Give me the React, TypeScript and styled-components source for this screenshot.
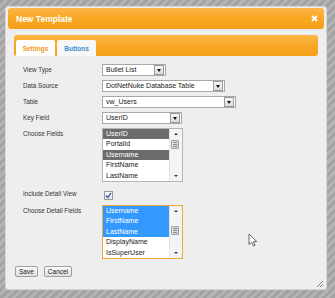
import React from "react";
import styled, { createGlobalStyle, css } from "styled-components";

const GlobalStyle = createGlobalStyle`
  html, body {
    margin: 0;
    padding: 0;
  }
  body {
    width: 335px;
    height: 298px;
    overflow: hidden;
    background: repeating-linear-gradient(
      135deg,
      #a3a3a3 0px,
      #a3a3a3 3px,
      #b4b4b4 3px,
      #b4b4b4 6px
    );
    font-family: "Liberation Sans", Arial, sans-serif;
  }
`;

const orange = css`
  background: linear-gradient(#fcb646, #f8a622 55%, #f6a01a);
`;

const Dialog = styled.div`
  position: relative;
  box-sizing: border-box;
  margin: 6px 0 0 5px;
  width: 322px;
  height: 284px;
  border: 1px solid #d4d4d4;
  border-radius: 3px;
  background: #eeeeee;
  padding: 1px 2px 0;
  display: flex;
  flex-direction: column;
`;

const TitleBar = styled.div`
  ${orange};
  height: 21px;
  border-radius: 3px;
  display: flex;
  align-items: center;
  justify-content: space-between;
  padding: 0 6px 0 8px;
  color: #fff;
  font-weight: bold;
  font-size: 8.5px;
`;

const Content = styled.div`
  padding: 6px 6px 0;
`;

const TabBar = styled.div`
  ${orange};
  height: 21px;
  box-sizing: border-box;
  border-radius: 3px;
  padding: 5px 2px 0;
  display: flex;
  align-items: flex-end;
  gap: 2px;
`;

const Tab = styled.div<{ $active?: boolean }>`
  width: 39px;
  height: 16px;
  border-radius: 2px 2px 0 0;
  background: ${(p) => (p.$active ? "#ffffff" : "#f7f7f7")};
  color: ${(p) => (p.$active ? "#f29b21" : "#3a8fd0")};
  font-weight: bold;
  font-size: 6.5px;
  display: flex;
  align-items: center;
  justify-content: center;
`;

const Form = styled.div`
  display: grid;
  grid-template-columns: 79px auto;
  row-gap: 4px;
  padding: 8px 0 0 9px;
  justify-items: start;
`;

const Label = styled.div<{ $h?: number }>`
  font-size: 6.3px;
  color: #333;
  line-height: ${(p) => p.$h ?? 12}px;
`;

const Select = styled.div<{ $w: number }>`
  box-sizing: border-box;
  width: ${(p) => p.$w}px;
  height: 12px;
  border: 1px solid #a8a8a8;
  background: #fff;
  display: flex;
  align-items: stretch;
`;

const SelectText = styled.div`
  flex: 1;
  font-size: 7px;
  line-height: 10px;
  padding-left: 3px;
  color: #222;
`;

const DropButton = styled.div`
  width: 10px;
  margin: 0 1px 0 0;
  box-sizing: border-box;
  border: 1px solid #9a9a9a;
  background: linear-gradient(#f6f6f6, #dcdcdc);
  display: flex;
  align-items: center;
  justify-content: center;
  &::after {
    content: "";
    border-left: 2.5px solid transparent;
    border-right: 2.5px solid transparent;
    border-top: 3px solid #111;
  }
`;

const ListBox = styled.div<{ $focus?: boolean }>`
  box-sizing: border-box;
  width: 81px;
  height: 54px;
  border: 1px solid ${(p) => (p.$focus ? "#f0a53a" : "#b5b5b5")};
  background: #fff;
  display: flex;
  overflow: hidden;
`;

const Items = styled.div`
  flex: 1;
`;

const Item = styled.div<{ $sel?: "gray" | "blue" }>`
  height: 10.4px;
  line-height: 10.4px;
  font-size: 7px;
  padding-left: 3px;
  color: ${(p) => (p.$sel ? "#fff" : "#222")};
  background: ${(p) =>
    p.$sel === "gray" ? "#6c6c6c" : p.$sel === "blue" ? "#3399ff" : "transparent"};
`;

const ScrollBar = styled.div`
  position: relative;
  width: 12px;
  background: #f4f4f4;
  border-left: 1px solid #e2e2e2;
`;

const Arrow = styled.div<{ $down?: boolean }>`
  position: absolute;
  left: 4px;
  ${(p) => (p.$down ? "bottom: 4px;" : "top: 4px;")}
  border-left: 2px solid transparent;
  border-right: 2px solid transparent;
  ${(p) =>
    p.$down ? "border-top: 2px solid #333;" : "border-bottom: 2px solid #333;"}
`;

const Thumb = styled.div`
  position: absolute;
  left: 1px;
  width: 8px;
  height: 9px;
  box-sizing: border-box;
  border: 1px solid #a0a0a0;
  border-radius: 1px;
  background: linear-gradient(90deg, #e8e8e8, #d4d4d4);
  display: flex;
  flex-direction: column;
  justify-content: center;
  align-items: center;
  gap: 1px;
  & > i {
    width: 4px;
    height: 1px;
    background: #888;
  }
`;

const CheckRow = styled.div`
  height: 15px;
  display: flex;
  align-items: flex-start;
  padding: 5px 0 0 2px;
  box-sizing: border-box;
`;

const CheckBox = styled.div`
  width: 9px;
  height: 9px;
  box-sizing: border-box;
  border: 1px solid #9a9a9a;
  background: linear-gradient(#fafafa, #e6e6e6);
  display: flex;
  align-items: center;
  justify-content: center;
`;

const Footer = styled.div`
  display: flex;
  gap: 6px;
  padding: 7px 0 0 7px;
`;

const Button = styled.div`
  height: 11px;
  box-sizing: border-box;
  padding: 0 3px;
  border: 1px solid #a0a0a0;
  border-radius: 2px;
  background: linear-gradient(#fbfbfb, #dedede);
  font-size: 6.5px;
  line-height: 9px;
  color: #222;
`;

const Grip = styled.svg`
  position: absolute;
  right: 2px;
  bottom: 1px;
`;

const Cursor = styled.svg`
  position: absolute;
  left: 242px;
  top: 226px;
`;

type ListItem = { name: string; sel?: "gray" | "blue" };

const List = ({
  items,
  focus,
  thumbTop,
}: {
  items: ListItem[];
  focus?: boolean;
  thumbTop: number;
}) => (
  <ListBox $focus={focus}>
    <Items>
      {items.map((it) => (
        <Item key={it.name} $sel={it.sel}>
          {it.name}
        </Item>
      ))}
    </Items>
    <ScrollBar>
      <Arrow />
      <Thumb style={{ top: thumbTop }}>
        <i />
        <i />
        <i />
      </Thumb>
      <Arrow $down />
    </ScrollBar>
  </ListBox>
);

const Dropdown = ({ value, width }: { value: string; width: number }) => (
  <Select $w={width}>
    <SelectText>{value}</SelectText>
    <DropButton />
  </Select>
);

export default function App() {
  return (
    <>
      <GlobalStyle />
      <Dialog>
        <TitleBar>
          <span>New Template</span>
          <svg width="7" height="7" viewBox="0 0 7 7">
            <path d="M1 1L6 6M6 1L1 6" stroke="#fff" strokeWidth="1.8" />
          </svg>
        </TitleBar>
        <Content>
          <TabBar>
            <Tab $active>Settings</Tab>
            <Tab>Buttons</Tab>
          </TabBar>
          <Form>
            <Label>View Type</Label>
            <Dropdown value="Bullet List" width={64} />
            <Label>Data Source</Label>
            <Dropdown value="DotNetNuke Database Table" width={123} />
            <Label>Table</Label>
            <Dropdown value="vw_Users" width={134} />
            <Label>Key Field</Label>
            <Dropdown value="UserID" width={80} />
            <Label>Choose Fields</Label>
            <List
              thumbTop={11}
              items={[
                { name: "UserID", sel: "gray" },
                { name: "PortalId" },
                { name: "Username", sel: "gray" },
                { name: "FirstName" },
                { name: "LastName" },
              ]}
            />
            <Label $h={15}>Include Detail View</Label>
            <CheckRow>
              <CheckBox>
                <svg width="7" height="7" viewBox="0 0 7 7">
                  <path
                    d="M1 3.5L2.8 5.6L6 0.8"
                    fill="none"
                    stroke="#2b4fa8"
                    strokeWidth="1.2"
                  />
                </svg>
              </CheckBox>
            </CheckRow>
            <Label>Choose Detail Fields</Label>
            <List
              focus
              thumbTop={20}
              items={[
                { name: "Username", sel: "blue" },
                { name: "FirstName", sel: "blue" },
                { name: "LastName", sel: "blue" },
                { name: "DisplayName" },
                { name: "IsSuperUser" },
              ]}
            />
          </Form>
        </Content>
        <Footer>
          <Button>Save</Button>
          <Button>Cancel</Button>
        </Footer>
        <Cursor width="10" height="14" viewBox="0 0 10 14">
          <path
            d="M1 1L1 11.5L3.6 9.2L5.4 13L7 12.3L5.3 8.6L8.8 8.6Z"
            fill="#fff"
            stroke="#555"
            strokeWidth="0.9"
            strokeLinejoin="round"
          />
        </Cursor>
        <Grip width="9" height="9" viewBox="0 0 9 9">
          <path d="M8 2L2 8M8 5L5 8M8 7.5L7.5 8" stroke="#777" strokeWidth="0.9" />
        </Grip>
      </Dialog>
    </>
  );
}
